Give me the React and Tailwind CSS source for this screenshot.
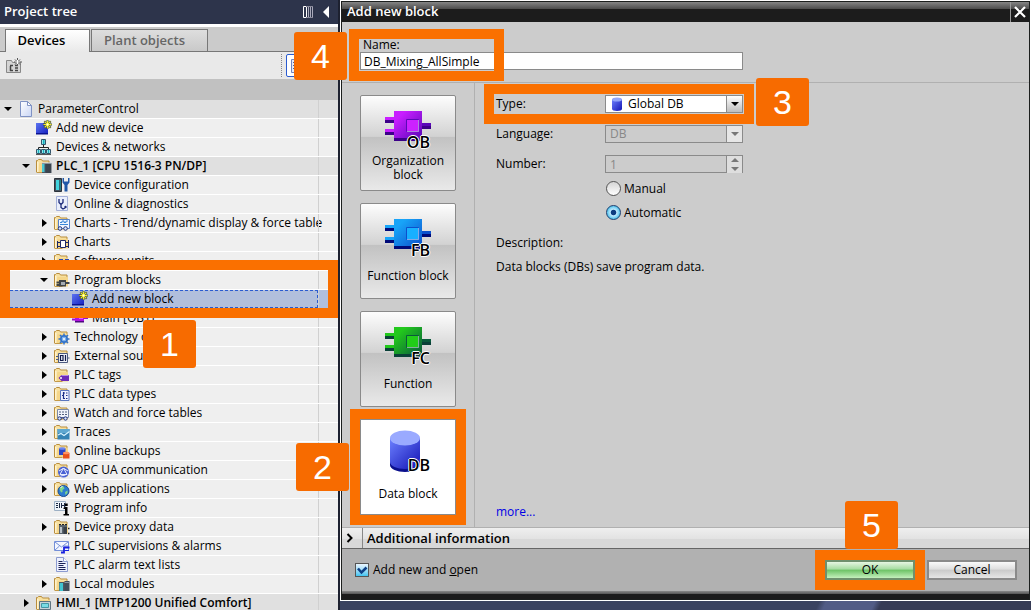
import React from "react";
import clsx from "clsx";

const Callout = ({ n, className }) => (
  <span
    className={clsx(
      "pointer-events-none absolute z-20 flex h-12 w-[53px] items-center justify-center rounded-[3px] bg-[#f76b00] font-['Liberation_Sans',sans-serif] text-[34px] leading-none font-normal text-white",
      className
    )}
  >
    {n}
  </span>
);

const Highlight = ({ className }) => (
  <span
    className={clsx(
      "pointer-events-none absolute z-10 border-10 border-[#fa7000]",
      className
    )}
  />
);

/* ---------- tree icons, all on a 16x16 grid ---------- */

const Folder = () => (
  <g>
    <path d="M.500 14V2.500h1l1-1h3l1 1.500h6.500V13" fill="#f7e0a0" stroke="#b98d3c" />
    <path d="M1 14.500 3.500 5h10.500v9.500z" fill="#f5d68a" />
    <path d="M1 4h1.500v10H1z" fill="#fff3cf" />
    <path d="M.500 14.500h8" stroke="#c49a48" />
  </g>
);

const Star = () => (
  <g stroke="#f4ee2c" strokeWidth="1.2">
    <path d="M11.500 0v9M7 4.500h9M8.300 1.300l6.400 6.400M14.700 1.300 8.300 7.700" stroke="#3c4a3a" strokeWidth="2" />
    <path d="M11.500.500v8M7.500 4.500h8M8.700 1.700l5.600 5.600M14.300 1.700 8.700 7.300" />
    <circle cx="11.500" cy="4.500" r="1" fill="#fff" stroke="none" />
  </g>
);

const ICONS = {
  page: (
    <g>
      <path d="M2.500.500h7l4 4v11h-11z" fill="url(#pageFill)" stroke="#7f92c4" />
      <path d="M9.500.500v4h4z" fill="#fff" stroke="#7f92c4" />
    </g>
  ),
  add: (
    <g>
      <path d="M0 3h12v11H0z" fill="url(#blueFill)" />
      <path d="M0 13h12v1.500H0z" fill="#0a1290" />
      <Star />
    </g>
  ),
  network: (
    <g>
      <path d="M7.500 5v4M2.500 11V8.500h10V11" fill="none" stroke="#222" />
      <path d="M5.500.500h4v5h-4zM.500 10.500h4v4h-4zM5.500 10.500h4v4h-4zM10.500 10.500h4v4h-4z" fill="#8fe3ea" stroke="#33566b" />
      <path d="M7 1h1.500v4H7zM2 11h1v3H2zM7 11h1v3H7zM12 11h1v3h-1z" fill="#16b0bd" />
      <path d="M0 15.500h5M5 15.500h5M10 15.500h5" stroke="#555" />
    </g>
  ),
  plc: (
    <g>
      <Folder />
      <path d="M6 5h9.500v10H6z" fill="#4b5763" />
      <path d="M6 6h2.500v8H6z" fill="#49c6d2" />
      <path d="M9.500 6H15v9H9.500z" fill="#3b444e" />
      <path d="M6 5h9.500" stroke="#c9d3dc" />
    </g>
  ),
  config: (
    <g>
      <path d="M.500 1.500h7v13h-7z" fill="#46525e" stroke="#2b333b" />
      <path d="M2 3h3v10H2z" fill="#41d4de" />
      <path d="M5.500 3H7v10H5.500z" fill="#22808a" />
      <path d="M8.500 1v4.500L10.500 8v6.500h3V8l2-2.500V1H14v3.500h-4V1z" fill="#1f58a8" />
    </g>
  ),
  diag: (
    <g>
      <path d="M2.500.500h11v14h-11z" fill="#e9eefb" stroke="#a4b0d8" />
      <path d="M5 3v3.500l2 2 2-2V3M7 9v2.500l2 1.500 2-1" fill="none" stroke="#1c2a78" strokeWidth="1.300" />
      <circle cx="11.500" cy="11" r="1.200" fill="#1c2a78" />
    </g>
  ),
  watch: (
    <g>
      <Folder />
      <path d="M4.500 4.500h11v9h-11z" fill="#f1f6ff" stroke="#5580c8" />
      <path d="M6 7.500h2V6h2v1.500h2V6h2M6 9.500h8" fill="none" stroke="#3a86d6" />
      <circle cx="6" cy="13.500" r="1.800" fill="#dbe6fa" stroke="#22357c" />
      <circle cx="11.500" cy="13.500" r="1.800" fill="#dbe6fa" stroke="#22357c" />
    </g>
  ),
  charts: (
    <g>
      <Folder />
      <path d="M6.500 6.500h5v7h-5z" fill="#fff" stroke="#1c2666" />
      <path d="M3 8.500h3M3 12.500h3M3.500 7v7M12 8.500h3M12 12.500h3M14.500 6v8" stroke="#1c2666" />
    </g>
  ),
  units: (
    <g>
      <Folder />
      <path d="M5 6h4v4H5zM11 6h4v4h-4zM8 11h5v4H8z" fill="#2a48b8" />
    </g>
  ),
  blocks: (
    <g>
      <Folder />
      <path d="M5 8h7v6.500H5z" fill="#3f4449" />
      <path d="M2.500 10.500H5M12 11h3.500M2.500 13H5" stroke="#3f4449" strokeWidth="1.800" />
      <path d="M7 10h4v3H7z" fill="#a3abb2" />
    </g>
  ),
  ob: (
    <g>
      <path d="M3 2h9v10H3z" fill="#b012e0" />
      <path d="M0 5h3M0 9.500h3M12 8h4" stroke="#9a10d0" strokeWidth="2" />
      <path d="M3 11h9v1.500H3z" fill="#4d0a80" />
      <path d="M7 5h4v4H7z" fill="#e060ff" />
    </g>
  ),
  tech: (
    <g>
      <Folder />
      <circle cx="10" cy="10" r="3.200" fill="#7fb2ec" stroke="#2f72cc" strokeWidth="1.500" />
      <path d="M10 4.500v3M10 12.500v3M4.500 10h3M12.500 10h3M6 6l2 2M12 12l2 2M14 6l-2 2M8 12l-2 2" stroke="#2f72cc" strokeWidth="1.500" />
      <circle cx="10" cy="10" r="1" fill="#fff" />
    </g>
  ),
  source: (
    <g>
      <Folder />
      <path d="M4.500 5.500h9v9h-9z" fill="#eef1f8" stroke="#4c5a80" />
      <path d="M2 8.500h2M2 11.500h2M14 10h1.500" stroke="#4c5a80" />
      <path d="M6.500 7.500H9v5H6.500zM11.500 7v6" fill="none" stroke="#111a4a" strokeWidth="1.200" />
    </g>
  ),
  tags: (
    <g>
      <Folder />
      <path d="m4.500 11 3-3h7.500v6H7.500z" fill="#6d2ab8" />
      <path d="M7.500 8.500h7" stroke="#b58be6" />
      <circle cx="7" cy="11" r="1" fill="#fff" />
    </g>
  ),
  types: (
    <g>
      <Folder />
      <path d="M6.500 4.500h8.500v10H6.500z" fill="#eef2ff" stroke="#5a76c0" />
      <path d="M9.500 6v7M8 9.500h2M10 7h1M10 12.500h1M12 7h1.500M12 9.500h1.500M12 12.500h1.500" stroke="#1c2f88" strokeWidth="1.200" />
    </g>
  ),
  force: (
    <g>
      <Folder />
      <path d="M3.500 4.500h11v8h-11z" fill="#f1f4fb" stroke="#7b89a8" />
      <path d="M5 7h9M5 9.500h9" stroke="#53607e" strokeDasharray="2 1" />
      <circle cx="5.500" cy="13.500" r="1.700" fill="#dbe6fa" stroke="#22357c" />
      <circle cx="11.500" cy="13.500" r="1.700" fill="#dbe6fa" stroke="#22357c" />
      <path d="M7 13h3" stroke="#22357c" />
    </g>
  ),
  traces: (
    <g>
      <Folder />
      <path d="M3.500 5h12v10.500h-12z" fill="#3583b4" />
      <path d="M3.500 5h12v4h-12z" fill="#5ea7d0" />
      <path d="m4 11 3-1.500 3 2 5.500-4" fill="none" stroke="#d8f4ff" strokeWidth="1.200" />
    </g>
  ),
  backup: (
    <g>
      <Folder />
      <path d="M5 5.500h6.500V12H5z" fill="#2c46c8" />
      <ellipse cx="8.200" cy="5.500" rx="3.200" ry="1.300" fill="#6d86f0" />
      <path d="M9 10h6.500v5.500H9z" fill="#e8501c" />
      <ellipse cx="12.200" cy="10" rx="3.200" ry="1.200" fill="#ff9260" />
    </g>
  ),
  opc: (
    <g>
      <Folder />
      <circle cx="9.500" cy="10" r="5.500" fill="#4a62d4" />
      <path d="m9.500 6 3.500 6.500H6zM5 9l4-2.500M14 9l-4-2.500M6.500 14l5-1" fill="none" stroke="#e7ecff" />
    </g>
  ),
  web: (
    <g>
      <Folder />
      <circle cx="9.500" cy="10" r="5.500" fill="#2c7cd0" stroke="#1b4e94" />
      <path d="M5.500 8c1-2 3-3 4-2.500l1 2-2 1.500v2l-1.500.500zM11 11l2.500-1.500v2.500l-2 2z" fill="#7fd68a" />
      <path d="M6.500 6.500 8.500 5.500" stroke="#fff" />
    </g>
  ),
  info: (
    <g>
      <path d="M.500 1.500h11v9H.500z" fill="#eef4fa" stroke="#9db0c4" />
      <path d="M2 3.500h2M2 5.500h2M2 7.500h2M5.500 3v5M7.500 3v5M7 5.500h3M10.500 3v4" stroke="#1d2a44" />
      <path d="M10.500 7h3v7H15v1.500H9.500V14H11V9H9.500V8zM11 3.500h2.700V6H11z" fill="#000" />
    </g>
  ),
  proxy: (
    <g>
      <Folder />
      <path d="M5 6h8v9H5z" fill="#59636c" />
      <path d="M6 8h2v6H6z" fill="#b9c2c9" />
      <path d="M9.500 8H13v7H9.500z" fill="#3a4148" />
      <path d="M5 5.500h9" stroke="#222" strokeDasharray="2 1" />
      <path d="M14 9.500h1.500M14 14.500h1.500" stroke="#222" strokeWidth="1.500" />
    </g>
  ),
  mail: (
    <g>
      <path d="M.500 3.500h14v9H.500z" fill="#f4f7ff" stroke="#7590d8" />
      <path d="m1 4 6.500 5L14 4M1 12l4.500-4M14 8h-4" fill="none" stroke="#7590d8" />
      <path d="M7 14.500h3V9.500h5.500" fill="none" stroke="#1a22e0" strokeWidth="1.800" />
      <path d="M11 12.500h4" stroke="#1a22e0" />
    </g>
  ),
  list: (
    <g>
      <path d="M2.500.500h7l4 4v10h-11z" fill="#eef1fd" stroke="#8c9bd0" />
      <path d="M9.500.500v4h4" fill="#fff" stroke="#8c9bd0" />
      <path d="M4.500 4.500h4M4.500 6.500h7M4.500 8.500h5M4.500 10.500h7M4.500 12.500h7" stroke="#1c2257" />
    </g>
  ),
  local: (
    <g>
      <Folder />
      <path d="M5 6h10v9H5z" fill="#4b5763" />
      <path d="M5.500 7H9v8H5.500z" fill="#41c4d0" />
      <path d="M10.500 5h5v10h-5z" fill="#424d59" />
      <path d="M10.500 6.500h5" stroke="#8b97a3" />
    </g>
  ),
  hmi: (
    <g>
      <Folder />
      <path d="M3.500 6.500h11v8h-11z" fill="#c6d2d8" stroke="#5f7480" />
      <path d="M5.500 8.500h7v4h-7z" fill="#79dbe4" stroke="#4497a4" />
    </g>
  ),
};

const Icon = ({ name }) => (
  <svg viewBox="0 0 16 16" className="size-4 shrink-0" aria-hidden="true">
    {ICONS[name]}
  </svg>
);

const Arrow = ({ state }) => (
  <span className="flex w-[18px] shrink-0 justify-center pr-[3px]">
    {state && (
      <svg viewBox="0 0 10 10" className="size-2.5" aria-hidden="true">
        <path d={state === "open" ? "M1 3h8L5 7z" : "M3 1v8l5-4z"} />
      </svg>
    )}
  </span>
);

const TREE = [
  { level: 0, arrow: "open", icon: "page", label: "ParameterControl", shade: true },
  { level: 1, icon: "add", label: "Add new device" },
  { level: 1, icon: "network", label: "Devices & networks" },
  { level: 1, arrow: "open", icon: "plc", label: "PLC_1 [CPU 1516-3 PN/DP]", shade: true, bold: true },
  { level: 2, icon: "config", label: "Device configuration" },
  { level: 2, icon: "diag", label: "Online & diagnostics" },
  { level: 2, arrow: "closed", icon: "watch", label: "Charts - Trend/dynamic display & force table" },
  { level: 2, arrow: "closed", icon: "charts", label: "Charts" },
  { level: 2, arrow: "closed", icon: "units", label: "Software units" },
  { level: 2, arrow: "open", icon: "blocks", label: "Program blocks", step: 1 },
  { level: 3, icon: "add", label: "Add new block", selected: true },
  { level: 3, icon: "ob", label: "Main [OB1]" },
  { level: 2, arrow: "closed", icon: "tech", label: "Technology o" },
  { level: 2, arrow: "closed", icon: "source", label: "External sour" },
  { level: 2, arrow: "closed", icon: "tags", label: "PLC tags" },
  { level: 2, arrow: "closed", icon: "types", label: "PLC data types" },
  { level: 2, arrow: "closed", icon: "force", label: "Watch and force tables" },
  { level: 2, arrow: "closed", icon: "traces", label: "Traces" },
  { level: 2, arrow: "closed", icon: "backup", label: "Online backups" },
  { level: 2, arrow: "closed", icon: "opc", label: "OPC UA communication" },
  { level: 2, arrow: "closed", icon: "web", label: "Web applications" },
  { level: 2, icon: "info", label: "Program info" },
  { level: 2, arrow: "closed", icon: "proxy", label: "Device proxy data" },
  { level: 2, icon: "mail", label: "PLC supervisions & alarms" },
  { level: 2, icon: "list", label: "PLC alarm text lists" },
  { level: 2, arrow: "closed", icon: "local", label: "Local modules" },
  { level: 1, arrow: "closed", icon: "hmi", label: "HMI_1 [MTP1200 Unified Comfort]", shade: true, bold: true },
];

const INDENT = ["pl-0", "pl-[18px]", "pl-9", "pl-[54px]"];

const TreeRow = ({ row }) => (
  <li
    className={clsx(
      "relative flex h-[19px] border-b border-white",
      row.selected ? "bg-[#b1bfdc]" : row.shade ? "bg-[#e0e0e0]" : "bg-[#efefef]"
    )}
  >
    <div
      className={clsx(
        "flex min-w-0 flex-1 items-center",
        INDENT[row.level],
        row.selected && "outline-1 -outline-offset-1 outline-dashed outline-[#2a5bd0]"
      )}
    >
      <Arrow state={row.arrow} />
      <Icon name={row.icon} />
      <span className={clsx("pl-1 whitespace-nowrap", row.bold && "font-semibold")}>
        {row.label}
      </span>
    </div>
    <div className="w-5 shrink-0 border-l border-[#d0d0d0]" />
    {row.step && (
      <>
        <Highlight className="inset-x-0 -top-[11px] h-[58px]" />
        <Callout n={row.step} className="top-[49px] left-[143px]" />
      </>
    )}
  </li>
);

const ProjectTree = () => (
  <aside className="flex w-[338px] shrink-0 flex-col bg-[#efefef]">
    <header className="flex h-6 shrink-0 items-center bg-[#2d344b] px-1 text-white">
      <h1 className="flex-1 text-[13px] font-semibold">Project tree</h1>
      <button aria-label="Columns" className="mr-2">
        <svg viewBox="0 0 12 12" className="size-3">
          <path d="M1.500.500h3v11h-3z" fill="none" stroke="#fff" />
          <path d="M6.500 0v12M8.500 0v12M10.500 0v12" stroke="#aab" />
          <path d="M4 .500h7M4 11.500h7" stroke="#889" />
        </svg>
      </button>
      <button aria-label="Collapse" className="mr-1">
        <svg viewBox="0 0 8 12" className="h-3 w-2">
          <path d="M7 0v12L1 6z" fill="#fff" />
        </svg>
      </button>
    </header>
    <div className="h-[3px] shrink-0 bg-white" />
    <div className="flex h-[25px] shrink-0 items-end border-b border-[#777] bg-[#cbcbcb] pl-[5px] text-[13px] font-semibold">
      <button className="-mb-px h-[23px] w-[85px] border border-b-0 border-[#777] bg-linear-to-b from-white to-[#e9e9e9] pr-3 text-black">
        Devices
      </button>
      <button className="ml-px h-[22px] w-[117px] border border-b-0 border-[#777] bg-linear-to-b from-[#dedede] to-[#c9c9c9] pr-2.5 text-[#666]">
        Plant objects
      </button>
    </div>
    <div className="flex h-[27px] shrink-0 items-center bg-[#e9e9e9] pl-1.5">
      <button aria-label="Add group">
        <svg viewBox="0 0 16 16" className="size-4">
          <path d="M.500 14.500v-12h5l1 2h8v10z" fill="#d4d4d4" stroke="#888" />
          <path d="M4.500 8v5M4 7.500h3M4 12.500h3M9 7.500h3M9 10h3M9 12.500h3" stroke="#444" strokeWidth="1.500" />
          <path d="M11.500 0v8M8 4h8M9 1.500l5 5M14 1.500l-5 5" stroke="#555" />
          <path d="M11.500 2v4M9.500 4h4" stroke="#fff" />
        </svg>
      </button>
      <span className="ml-auto h-[23px] border-l border-dotted border-[#888]" />
      <button
        aria-label="Details view"
        className="mr-7 ml-1 h-[23px] w-6 rounded-xs border border-[#2a5bd0] bg-white pl-1"
      >
        <svg viewBox="0 0 12 14" className="h-3.5 w-3">
          <path d="M.500.500h11v13H.500z" fill="#e5eaf8" stroke="#6f84c0" />
          <path d="M2 3.500h8M2 6.500h8M2 9.500h8" stroke="#4d5f9e" />
        </svg>
      </button>
    </div>
    <div className="h-[21px] shrink-0 bg-[#c1c1c1]" />
    <ul className="text-xs leading-[18px]">
      {TREE.map((row) => (
        <TreeRow key={row.label} row={row} />
      ))}
    </ul>
  </aside>
);

/* ---------- dialog ---------- */

const BlockArt = ({ tag, from, to, shade, core }) => (
  <svg viewBox="0 0 48 40" className="h-10 w-12" aria-hidden="true">
    <defs>
      <linearGradient id={"art" + tag} x1="0" y1="0" x2="1" y2="1">
        <stop offset="0.200" stopColor={from} />
        <stop offset="1" stopColor={to} />
      </linearGradient>
    </defs>
    <path d="M1 10h9v3H1zM1 22h9v3H1zM38 15h9v4h-9z" fill={shade} />
    <path d="M1 7h9v3H1zM1 19h9v3H1z" fill={from} />
    <path d="M38 13h9v3h-9z" fill={to} />
    <path d="M10 1h28v27H10z" fill={"url(#art" + tag + ")"} />
    <path d="M10 28h28v3H10z" fill={shade} />
    <path d="M22.500 9.500h12v12h-12z" fill={core} stroke={to} />
    <path d="M34.500 10v11.500H23" fill="none" stroke="#fff" strokeOpacity="0.500" />
  </svg>
);

const DataArt = () => (
  <svg viewBox="0 0 48 48" className="h-12 w-12" aria-hidden="true">
    <path d="M6 9v27c0 4 7 7 15 7s15-3 15-7V9z" fill="#0a0f8c" />
    <path d="M6 9v24c0 4 7 7 15 7s15-3 15-7V9z" fill="url(#dbFill)" />
    <ellipse cx="21" cy="9" rx="15" ry="7.500" fill="#9aaaff" />
  </svg>
);

const BLOCKS = [
  { tag: "OB", label: "Organization block", from: "#c81eff", to: "#5a08b8", shade: "#3c0088", core: "#cc22ff" },
  { tag: "FB", label: "Function block", from: "#18a4f8", to: "#0c50cc", shade: "#000a78", core: "#18b0ff" },
  { tag: "FC", label: "Function", from: "#22c81c", to: "#0a5a3c", shade: "#0a4038", core: "#22cc18" },
  { tag: "DB", label: "Data block", active: true, step: 2 },
];

const BlockButton = ({ block }) => (
  <div className="relative size-24">
    <button
      className={clsx(
        "flex size-24 flex-col items-center border border-[#8a8a8a] text-xs leading-[14px]",
        block.active
          ? "bg-white pt-[9px]"
          : "rounded-xs bg-[linear-gradient(#fdfdfd,#d2d2d2_43%,#c2c2c2_44%,#e9e9e9)] pt-3.5"
      )}
    >
      <span className="relative">
        {block.active ? <DataArt /> : <BlockArt {...block} />}
        <span
          className={clsx(
            "absolute right-0.5 text-base leading-4 font-semibold text-black [text-shadow:1px_0_#fff,-1px_0_#fff,0_1px_#fff,0_-1px_#fff]",
            block.active ? "bottom-1" : "bottom-0"
          )}
        >
          {block.tag}
        </span>
      </span>
      <span className="flex flex-1 items-center justify-center px-1 pb-1">
        {block.label}
      </span>
    </button>
    {block.step && (
      <>
        <Highlight className="-inset-2.5" />
        <Callout n={block.step} className="top-6 -left-16" />
      </>
    )}
  </div>
);

const DropArrow = ({ disabled }) => (
  <span
    className={clsx(
      "pointer-events-none absolute inset-y-px right-px flex w-4 items-center justify-center border-l border-[#8a8a8a]",
      disabled ? "bg-[#e6e6e6] text-[#777]" : "bg-linear-to-b from-white to-[#bdbdbd] text-black"
    )}
  >
    <svg viewBox="0 0 8 4" className="h-1 w-2" fill="currentColor">
      <path d="M0 0h8L4 4z" />
    </svg>
  </span>
);

const Radio = ({ label, checked }) => (
  <label className="flex h-[18px] items-center gap-[3px]">
    <input
      type="radio"
      name="numbering"
      defaultChecked={checked}
      className="size-[15px] appearance-none rounded-full border border-[#555] bg-linear-to-b from-[#d5d5d5] to-white checked:border-[#1d3f70] checked:bg-[radial-gradient(circle,#0d3c80_25%,#bfeaff_35%,#38b8e6_80%)]"
    />
    {label}
  </label>
);

const LABEL = "w-[109px] shrink-0";
const FIELD =
  "h-[18px] w-full appearance-none border border-[#8a8a8a] pr-4 leading-4 outline-none";

const BlockForm = () => (
  <section className="flex min-w-0 flex-1 flex-col border-l border-[#b0b0b0] pt-3 pl-[21px] text-xs leading-[18px]">
    <div className="relative flex">
      <label htmlFor="type" className={LABEL}>Type:</label>
      <div className="relative w-[138px]">
        <select id="type" className={clsx(FIELD, "bg-white pl-[22px] text-black")}>
          <option>Global DB</option>
        </select>
        <svg viewBox="0 0 10 14" className="absolute top-0.5 left-[7px] h-3.5 w-2.5">
          <path d="M0 2v10c0 1 2 2 5 2s5-1 5-2V2z" fill="url(#dbFill)" />
          <ellipse cx="5" cy="2.500" rx="5" ry="2" fill="#93a6fa" />
        </svg>
        <DropArrow />
      </div>
      <Highlight className="-top-[11px] -left-3 h-10 w-[270px]" />
      <Callout n={3} className="-top-[17px] left-[260px]" />
    </div>
    <div className="mt-3 flex">
      <label htmlFor="language" className={LABEL}>Language:</label>
      <div className="relative w-[138px]">
        <select id="language" disabled className={clsx(FIELD, "bg-[#ccc] pl-1 text-[#888] opacity-100")}>
          <option>DB</option>
        </select>
        <DropArrow disabled />
      </div>
    </div>
    <div className="mt-3 flex">
      <label htmlFor="number" className={LABEL}>Number:</label>
      <div className="relative w-[138px]">
        <input id="number" defaultValue="1" disabled className={clsx(FIELD, "bg-[#ccc] pl-1 text-[#888]")} />
        <span className="pointer-events-none absolute inset-y-px right-px flex w-4 flex-col items-center justify-between border-l border-[#8a8a8a] bg-[#dedede] py-0.5 text-[#777]">
          <svg viewBox="0 0 8 4" className="h-1 w-2" fill="currentColor"><path d="M0 4h8L4 0z" /></svg>
          <svg viewBox="0 0 8 4" className="h-1 w-2" fill="currentColor"><path d="M0 0h8L4 4z" /></svg>
        </span>
      </div>
    </div>
    <div className="mt-1.5 flex flex-col gap-1.5 pl-[110px]">
      <Radio label="Manual" />
      <Radio label="Automatic" checked />
    </div>
    <p className="mt-3">Description:</p>
    <p className="mt-1.5">Data blocks (DBs) save program data.</p>
    <a href="#more" className="mt-auto mb-1.5 self-start text-[#0000e6]">more...</a>
  </section>
);

const AddBlockDialog = () => (
  <div role="dialog" aria-labelledby="dialog-title" className="flex min-h-0 flex-1 flex-col border border-white">
    <div className="flex min-h-0 flex-1 flex-col border border-[#1c1f1e] bg-[#ccc]">
      <header className="flex h-5 shrink-0 bg-[linear-gradient(#858585,#4c4c4c_7px,#1c1c1c_7px)] text-white">
        <h2 id="dialog-title" className="flex-1 pl-[5px] text-[13px] leading-[18px] font-semibold">
          Add new block
        </h2>
        <button aria-label="Close" className="flex w-[19px] items-center justify-center border-l border-[#999]">
          <svg viewBox="0 0 12 12" className="size-3">
            <path d="m1 1 10 10M11 1 1 11" stroke="#fff" strokeWidth="2.200" />
          </svg>
        </button>
      </header>

      <div className="relative h-[61px] shrink-0 border-b border-[#b0b0b0] pt-4 pl-[18px] text-xs">
        <label htmlFor="name" className="block pl-[3px] leading-[14px]">Name:</label>
        <input
          id="name"
          defaultValue="DB_Mixing_AllSimple"
          className="block h-[18px] w-[383px] border border-[#8a8a8a] bg-white px-[3px] leading-4 outline-none"
        />
        <Highlight className="top-[7px] left-[7px] h-[52px] w-[155px]" />
        <Callout n={4} className="top-2.5 -left-12" />
      </div>

      <div className="flex min-h-0 flex-1">
        <nav className="flex w-[132px] shrink-0 flex-col gap-3 pt-3 pl-[18px]">
          {BLOCKS.map((block) => (
            <BlockButton key={block.tag} block={block} />
          ))}
        </nav>
        <BlockForm />
      </div>

      <button className="flex h-[22px] shrink-0 items-stretch border-t border-b border-t-[#b0b0b0] border-b-[#666] bg-[linear-gradient(#efefef,#e2e2e2_55%,#d8d8d8_56%)] text-left text-[13px] leading-5 font-semibold">
        <span className="flex w-[21px] items-center justify-center border-r border-[#888] pr-1">
          <svg viewBox="0 0 8 10" className="h-2.5 w-2">
            <path d="m1.500 1 4 4-4 4" fill="none" stroke="#000" strokeWidth="2" />
          </svg>
        </span>
        <span className="pl-1">Additional information</span>
      </button>

      <footer className="flex h-[42px] shrink-0 items-center gap-3 bg-[#b1b1b1] pr-3 pl-[13px] text-xs">
        <label className="mr-auto flex items-center gap-1">
          <span className="relative flex">
            <input
              type="checkbox"
              defaultChecked
              className="size-3.5 appearance-none border border-[#555] bg-linear-to-b from-[#eaf6ff] to-[#3cc4f0]"
            />
            <svg viewBox="0 0 14 14" className="pointer-events-none absolute inset-0 size-3.5">
              <path d="m3 5.500 3.500 4 5-5" fill="none" stroke="#0d3f86" strokeWidth="2.500" />
            </svg>
          </span>
          <span>Add new and <u>o</u>pen</span>
        </label>
        <div className="relative">
          <button className="block h-5 w-[90px] border-2 border-[#6f8f6c] bg-[linear-gradient(#e6f6e2,#a5dca0_45%,#6cc265_50%,#c4f0bc)] leading-4">
            OK
          </button>
          <Highlight className="-inset-2.5" />
          <Callout n={5} className="-top-[59px] left-5" />
        </div>
        <button className="block h-5 w-[90px] border-2 border-[#8a8a8a] bg-[linear-gradient(#fafafa,#dedede_45%,#cacaca_50%,#e6e6e6)] leading-4">
          Cancel
        </button>
      </footer>
      <div className="h-2 shrink-0 bg-[linear-gradient(#8a8a8a,#555_3px,#1c1c1c_3px)]" />
    </div>
  </div>
);

export default function App() {
  return (
    <div className="flex h-screen overflow-hidden bg-[#1d2130] font-['Open_Sans','Noto_Sans',sans-serif] text-black">
      <svg className="absolute size-0" aria-hidden="true">
        <defs>
          <linearGradient id="pageFill" x1="0" y1="0" x2="1" y2="1">
            <stop offset="0" stopColor="#fff" />
            <stop offset="1" stopColor="#c9d5f5" />
          </linearGradient>
          <linearGradient id="blueFill" x1="0" y1="0" x2="1" y2="1">
            <stop offset="0" stopColor="#5b74f0" />
            <stop offset="1" stopColor="#1620c0" />
          </linearGradient>
          <linearGradient id="dbFill" x1="0" y1="0" x2="1" y2="1">
            <stop offset="0" stopColor="#6c80ff" />
            <stop offset="1" stopColor="#1414b4" />
          </linearGradient>
        </defs>
      </svg>
      <ProjectTree />
      <main className="flex min-w-0 flex-1 flex-col pl-0.5">
        <AddBlockDialog />
        <div className="h-[9px] shrink-0 bg-[linear-gradient(115deg,#3a4260_69%,#525c86_70%,#525c86_77%,#363b55_78%)]" />
      </main>
    </div>
  );
}
